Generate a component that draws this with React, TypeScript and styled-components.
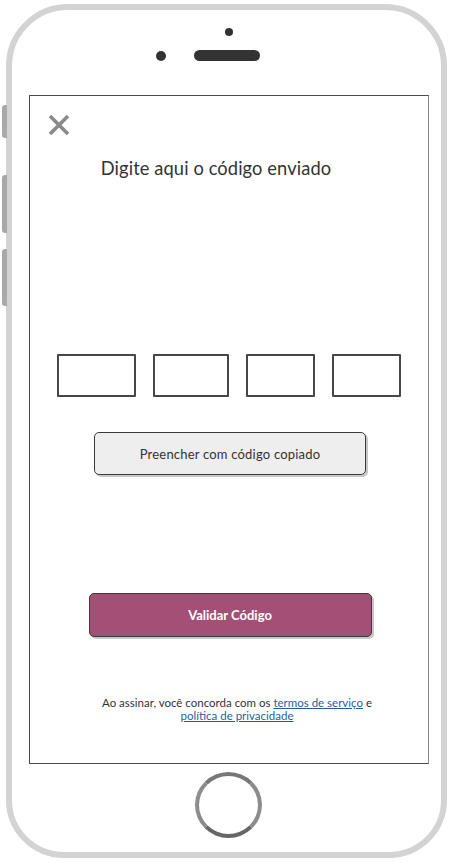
import React from "react";
import styled, { createGlobalStyle } from "styled-components";

const Global = createGlobalStyle`
  html, body { margin: 0; padding: 0; background: #ffffff; }
  body { font-family: Lato, "Open Sans", "Liberation Sans", sans-serif; }
  * { box-sizing: border-box; }
`;

const Page = styled.div`
  width: 453px;
  height: 863px;
  padding: 4px 0 0 6px;
  position: relative;
`;

const Phone = styled.div`
  position: relative;
  width: 441px;
  height: 854px;
  border: 6px solid #d3d3d3;
  border-radius: 62px 62px 58px 58px;
  background: #fff;
  display: flex;
  flex-direction: column;
`;

const SideButton = styled.div<{ $top: number; $h: number }>`
  position: absolute;
  left: -10px;
  top: ${(p) => p.$top}px;
  width: 5px;
  height: ${(p) => p.$h}px;
  background: #a9a9a9;
  border-radius: 3px 0 0 3px;
`;

const Header = styled.div`
  height: 85px;
  padding-top: 18px;
  display: flex;
  flex-direction: column;
`;

const TopDotRow = styled.div`
  padding-left: 213px;
  height: 22px;
`;

const Dot = styled.div<{ $size: number }>`
  width: ${(p) => p.$size}px;
  height: ${(p) => p.$size}px;
  border-radius: 50%;
  background: #333;
`;

const SensorRow = styled.div`
  display: flex;
  align-items: center;
  gap: 28px;
  padding-left: 144px;
`;

const Speaker = styled.div`
  width: 66px;
  height: 11px;
  border-radius: 6px;
  background: #333;
`;

const Screen = styled.div`
  margin-left: 17px;
  width: 400px;
  height: 669px;
  border: 1.5px solid #4a4a4a;
  border-right-color: #8a8a8a;
  display: flex;
  flex-direction: column;
  align-items: center;
`;

const CloseButton = styled.button`
  align-self: flex-start;
  margin: 18px 0 0 18px;
  padding: 0;
  border: none;
  background: none;
  width: 22px;
  height: 22px;
  cursor: pointer;
`;

const Title = styled.h1`
  margin: 21px 0 0 -26px;
  font-size: 18.3px;
  line-height: 22px;
  font-weight: 400;
  color: #333;
  letter-spacing: 0.1px;
`;

const CodeRow = styled.div`
  margin-top: 175px;
  align-self: flex-start;
  padding-left: 27px;
  display: flex;
  align-items: center;
  gap: 17px;
`;

const CodeBox = styled.input<{ $w: number }>`
  width: ${(p) => p.$w}px;
  height: 43px;
  border: 2px solid #474747;
  border-radius: 1px;
  background: #fff;
  outline: none;
`;

const CopyButton = styled.button`
  margin: 35px 0 0 2px;
  width: 272px;
  height: 43px;
  border: 1.5px solid #3a3a3a;
  border-radius: 5px;
  background: #eeeeee;
  box-shadow: 2px 2px 0 #c8c8c8;
  font-family: Lato, "Open Sans", sans-serif;
  font-size: 13px;
  color: #333;
  letter-spacing: 0.2px;
`;

const ValidateButton = styled.button`
  margin: 118px 0 0 2px;
  width: 283px;
  height: 44px;
  border: 1.5px solid #3a3a3a;
  border-radius: 5px;
  background: #a44f75;
  box-shadow: 2px 2px 0 #c8c8c8;
  font-family: Lato, "Open Sans", sans-serif;
  font-size: 13px;
  font-weight: 700;
  color: #fff;
`;

const Terms = styled.p`
  margin: 59px 0 0 16px;
  text-align: center;
  font-size: 11.5px;
  line-height: 13px;
  color: #333;
`;

const TermsLink = styled.a`
  color: #1f5fa0;
  text-decoration: underline;
`;

const HomeRow = styled.div`
  display: flex;
  justify-content: center;
  padding: 8px 0 0 0;
  margin-left: 3px;
`;

const HomeButton = styled.div`
  width: 67px;
  height: 66px;
  border-radius: 50%;
  border: 4px solid #8c8c8c;
  border-top-color: #777;
  border-bottom-color: #666;
`;

export default function App() {
  return (
    <Page>
      <Global />
      <Phone>
        <SideButton $top={95} $h={33} />
        <SideButton $top={165} $h={58} />
        <SideButton $top={239} $h={57} />
        <Header>
          <TopDotRow>
            <Dot $size={8} />
          </TopDotRow>
          <SensorRow>
            <Dot $size={10} />
            <Speaker />
          </SensorRow>
        </Header>
        <Screen>
          <CloseButton aria-label="Fechar">
            <svg width="22" height="22" viewBox="0 0 22 22">
              <path d="M2 2 L20 20 M20 2 L2 20" stroke="#8a8a8a" strokeWidth="3.6" strokeLinecap="butt" />
            </svg>
          </CloseButton>
          <Title>Digite aqui o código enviado</Title>
          <CodeRow>
            <CodeBox $w={79} />
            <CodeBox $w={76} />
            <CodeBox $w={69} />
            <CodeBox $w={69} />
          </CodeRow>
          <CopyButton>Preencher com código copiado</CopyButton>
          <ValidateButton>Validar Código</ValidateButton>
          <Terms>
            Ao assinar, você concorda com os <TermsLink href="#">termos de serviço</TermsLink> e
            <br />
            <TermsLink href="#">política de privacidade</TermsLink>
          </Terms>
        </Screen>
        <HomeRow>
          <HomeButton />
        </HomeRow>
      </Phone>
    </Page>
  );
}
